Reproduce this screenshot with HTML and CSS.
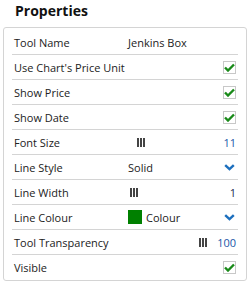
FILE: index.html
```html
<!DOCTYPE html>
<html>
<head>
    <title>Properties</title>
    <link rel="stylesheet" href="styles.css">
</head>
<body>
    <h2 class="title">Properties</h2>
    <div class="panel">
        <div class="row">
            <span class="label">Tool Name</span>
            <span class="value">Jenkins Box</span>
            <span></span>
        </div>
        <div class="row">
            <span class="label">Use Chart's Price Unit</span>
            <span></span>
            <span class="check"><svg width="11" height="9" viewBox="0 0 11 9"><path d="M1 4.5 L4 7.5 L10 1.5" fill="none" stroke="#198a19" stroke-width="2.4"/></svg></span>
        </div>
        <div class="row">
            <span class="label">Show Price</span>
            <span></span>
            <span class="check"><svg width="11" height="9" viewBox="0 0 11 9"><path d="M1 4.5 L4 7.5 L10 1.5" fill="none" stroke="#198a19" stroke-width="2.4"/></svg></span>
        </div>
        <div class="row">
            <span class="label">Show Date</span>
            <span></span>
            <span class="check"><svg width="11" height="9" viewBox="0 0 11 9"><path d="M1 4.5 L4 7.5 L10 1.5" fill="none" stroke="#198a19" stroke-width="2.4"/></svg></span>
        </div>
        <div class="row">
            <span class="label">Font Size</span>
            <span class="value"><span class="grip" style="margin-left: 9px"><i></i><i></i><i></i></span></span>
            <span class="num">11</span>
        </div>
        <div class="row">
            <span class="label">Line Style</span>
            <span class="value">Solid</span>
            <span class="chev"><svg width="11" height="7" viewBox="0 0 11 7"><path d="M1.2 1.2 L5.5 5.2 L9.8 1.2" fill="none" stroke="#1c6fbe" stroke-width="2.4"/></svg></span>
        </div>
        <div class="row">
            <span class="label">Line Width</span>
            <span class="value"><span class="grip" style="margin-left: 2px"><i></i><i></i><i></i></span></span>
            <span class="num dark">1</span>
        </div>
        <div class="row">
            <span class="label">Line Colour</span>
            <span class="value"><span class="swatch"></span>Colour</span>
            <span class="chev"><svg width="11" height="7" viewBox="0 0 11 7"><path d="M1.2 1.2 L5.5 5.2 L9.8 1.2" fill="none" stroke="#1c6fbe" stroke-width="2.4"/></svg></span>
        </div>
        <div class="row">
            <span class="label">Tool Transparency</span>
            <span></span>
            <span class="num"><span class="grip"><i></i><i></i><i></i></span>100</span>
        </div>
        <div class="row last">
            <span class="label">Visible</span>
            <span></span>
            <span class="check"><svg width="11" height="9" viewBox="0 0 11 9"><path d="M1 4.5 L4 7.5 L10 1.5" fill="none" stroke="#198a19" stroke-width="2.4"/></svg></span>
        </div>
    </div>
</body>
</html>
```

FILE: styles.css
```css
body {
    margin: 0;
    font-family: "Open Sans", sans-serif;
    color: #222;
    background: #fff;
}
.title {
    margin: 0;
    padding: 1px 0 0 15px;
    height: 26px;
    font-size: 14px;
    line-height: 20px;
    font-weight: bold;
    color: #111;
}
.panel {
    margin: 0 4px 0 3px;
    border: 1px solid #d4d4d4;
    border-radius: 3px;
    padding: 2px 8px 1px 8px;
}
.row {
    display: grid;
    grid-template-columns: 114px 1fr auto;
    align-items: center;
    height: 24px;
    padding: 0 2px;
    border-bottom: 1px solid #d4d4d4;
    font-size: 11px;
}
.row.last {
    border-bottom: none;
}
.value {
    display: flex;
    align-items: center;
}
.check {
    width: 11px;
    height: 11px;
    border: 1px solid #c8c8c8;
    display: flex;
    align-items: center;
    justify-content: center;
}
.chev {
    display: flex;
    margin-right: 1px;
}
.num {
    color: #2156a8;
    display: flex;
    align-items: center;
}
.num.dark {
    color: #1a2a50;
}
.grip {
    display: inline-flex;
    gap: 1px;
    margin-right: 10px;
}
.grip i {
    width: 2px;
    height: 9px;
    background: #444;
}
.swatch {
    width: 14px;
    height: 14px;
    background: #008000;
    margin-right: 4px;
}
```
